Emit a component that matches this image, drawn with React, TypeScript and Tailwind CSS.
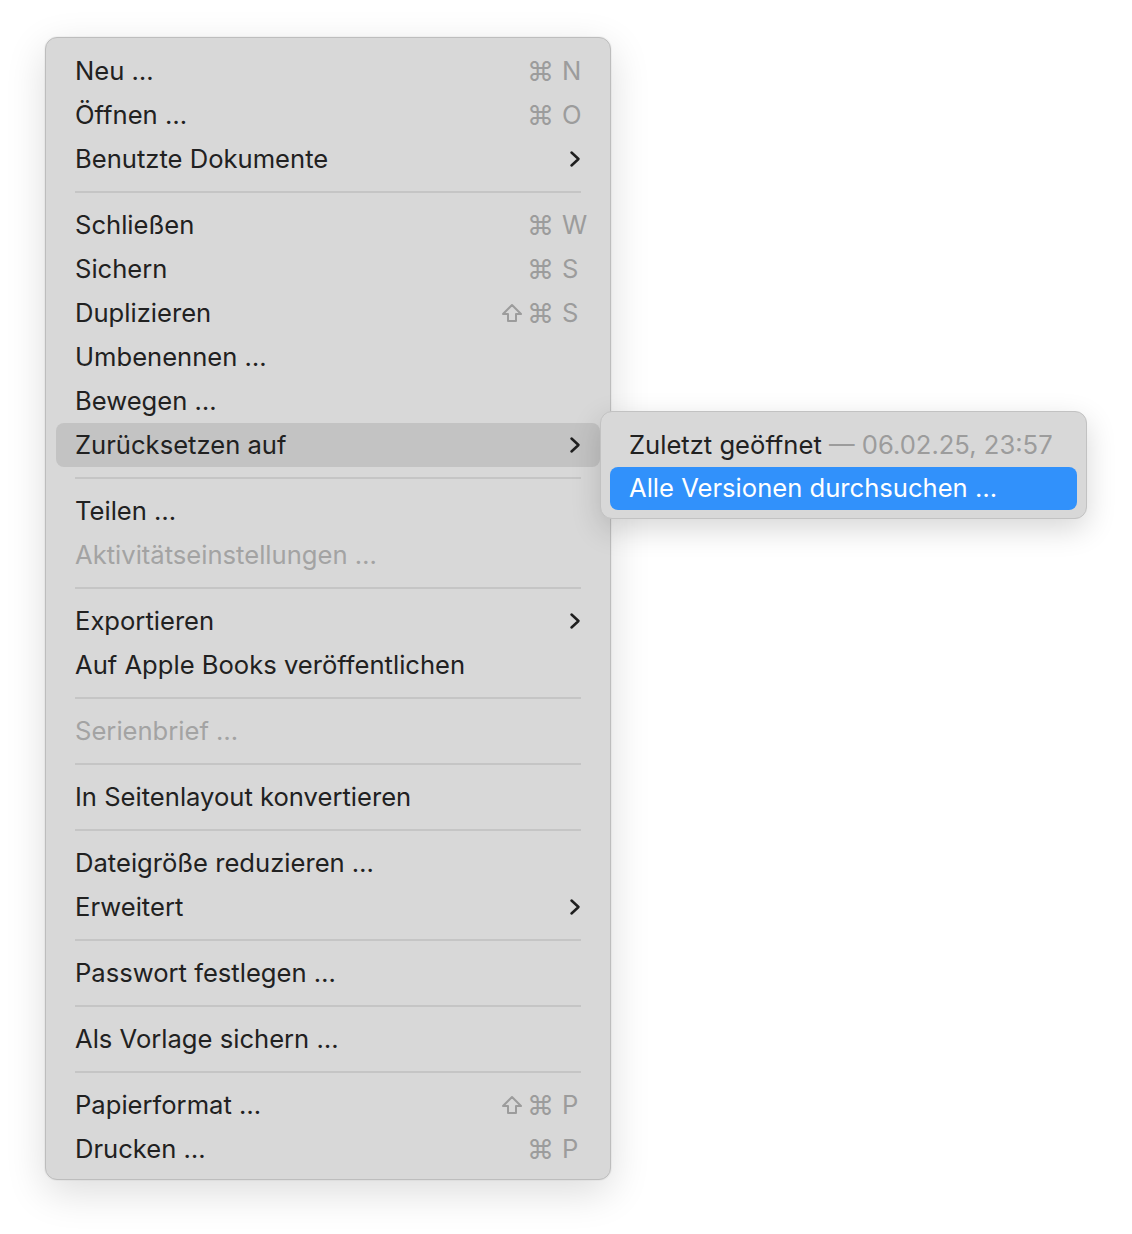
import React from "react";

type Item =
  | { type: "sep" }
  | {
      type?: "item";
      label: string;
      disabled?: boolean;
      sub?: boolean;
      shift?: boolean;
      key?: string;
      active?: boolean;
    };

const items: Item[] = [
  { label: "Neu …", key: "N" },
  { label: "Öffnen …", key: "O" },
  { label: "Benutzte Dokumente", sub: true },
  { type: "sep" },
  { label: "Schließen", key: "W" },
  { label: "Sichern", key: "S" },
  { label: "Duplizieren", key: "S", shift: true },
  { label: "Umbenennen …" },
  { label: "Bewegen …" },
  { label: "Zurücksetzen auf", sub: true, active: true },
  { type: "sep" },
  { label: "Teilen …" },
  { label: "Aktivitätseinstellungen …", disabled: true },
  { type: "sep" },
  { label: "Exportieren", sub: true },
  { label: "Auf Apple Books veröffentlichen" },
  { type: "sep" },
  { label: "Serienbrief …", disabled: true },
  { type: "sep" },
  { label: "In Seitenlayout konvertieren" },
  { type: "sep" },
  { label: "Dateigröße reduzieren …" },
  { label: "Erweitert", sub: true },
  { type: "sep" },
  { label: "Passwort festlegen …" },
  { type: "sep" },
  { label: "Als Vorlage sichern …" },
  { type: "sep" },
  { label: "Papierformat …", key: "P", shift: true },
  { label: "Drucken …", key: "P" },
];

function Chevron() {
  return (
    <svg width="14" height="18" viewBox="0 0 14 18" fill="none" className="mr-[-1px]">
      <path
        d="M3.5 2.5 L10.5 9 L3.5 15.5"
        stroke="#1f1f1f"
        strokeWidth="2.5"
        strokeLinecap="round"
        strokeLinejoin="round"
      />
    </svg>
  );
}

function ShiftIcon() {
  return (
    <svg width="22" height="20" viewBox="0 0 22 20" fill="none">
      <path
        d="M11 2 L20 11 H15 V18 H7 V11 H2 Z"
        stroke="#9c9c9c"
        strokeWidth="2"
        strokeLinejoin="round"
      />
    </svg>
  );
}

function Row({ it }: { it: Exclude<Item, { type: "sep" }> }) {
  return (
    <div
      className={
        "mx-[10px] h-[44px] px-[19px] flex items-center rounded-[8px] " +
        (it.active ? "bg-[#c3c3c3]" : "")
      }
    >
      <span
        className={
          "flex-1 whitespace-nowrap " +
          (it.disabled ? "text-[#a3a3a3]" : "text-[#212121]")
        }
      >
        {it.label}
      </span>
      {it.key && (
        <div className="flex items-center text-[#9c9c9c]">
          <div className="flex items-center justify-end gap-[4px]">
            {it.shift && <ShiftIcon />}
            <span className="text-[27px] leading-none">⌘</span>
          </div>
          <span className="w-[27px] pl-[8px] leading-none whitespace-nowrap">{it.key}</span>
        </div>
      )}
      {it.sub && <Chevron />}
    </div>
  );
}

export default function App() {
  return (
    <div
      className="min-h-[1234px] w-[1132px] bg-white"
      style={{ fontFamily: "Inter, 'Noto Sans', sans-serif" }}
    >
      <div className="relative pl-[45px] pt-[37px]">
        <div className="w-[566px] rounded-[12px] border border-[#bdbdbd] bg-[#d8d8d8] pt-[11px] pb-[8px] text-[25.6px] shadow-[0_12px_40px_rgba(0,0,0,0.14),0_0_0_1px_rgba(0,0,0,0.03)]">
          {items.map((it, i) =>
            it.type === "sep" ? (
              <div key={i} className="h-[22px] flex items-center px-[29px]">
                <div className="h-[2px] w-full bg-[#c5c5c5]" />
              </div>
            ) : (
              <Row key={i} it={it} />
            )
          )}
        </div>

        <div className="absolute left-[600px] top-[411px] w-[487px] rounded-[12px] border border-[#c2c2c2] bg-[#d8d8d8] pt-[11px] pb-[8px] text-[25.6px] shadow-[0_10px_30px_rgba(0,0,0,0.16)]">
          <div className="mx-[9px] h-[44px] px-[19px] flex items-center whitespace-nowrap">
            <span className="text-[#212121]">Zuletzt geöffnet</span>
            <span className="text-[#9c9c9c]">&nbsp;— 06.02.25, 23:57</span>
          </div>
          <div className="mx-[9px] h-[43px] px-[19px] flex items-center rounded-[8px] bg-[#3191fb] text-white whitespace-nowrap">
            Alle Versionen durchsuchen …
          </div>
        </div>
      </div>
    </div>
  );
}
